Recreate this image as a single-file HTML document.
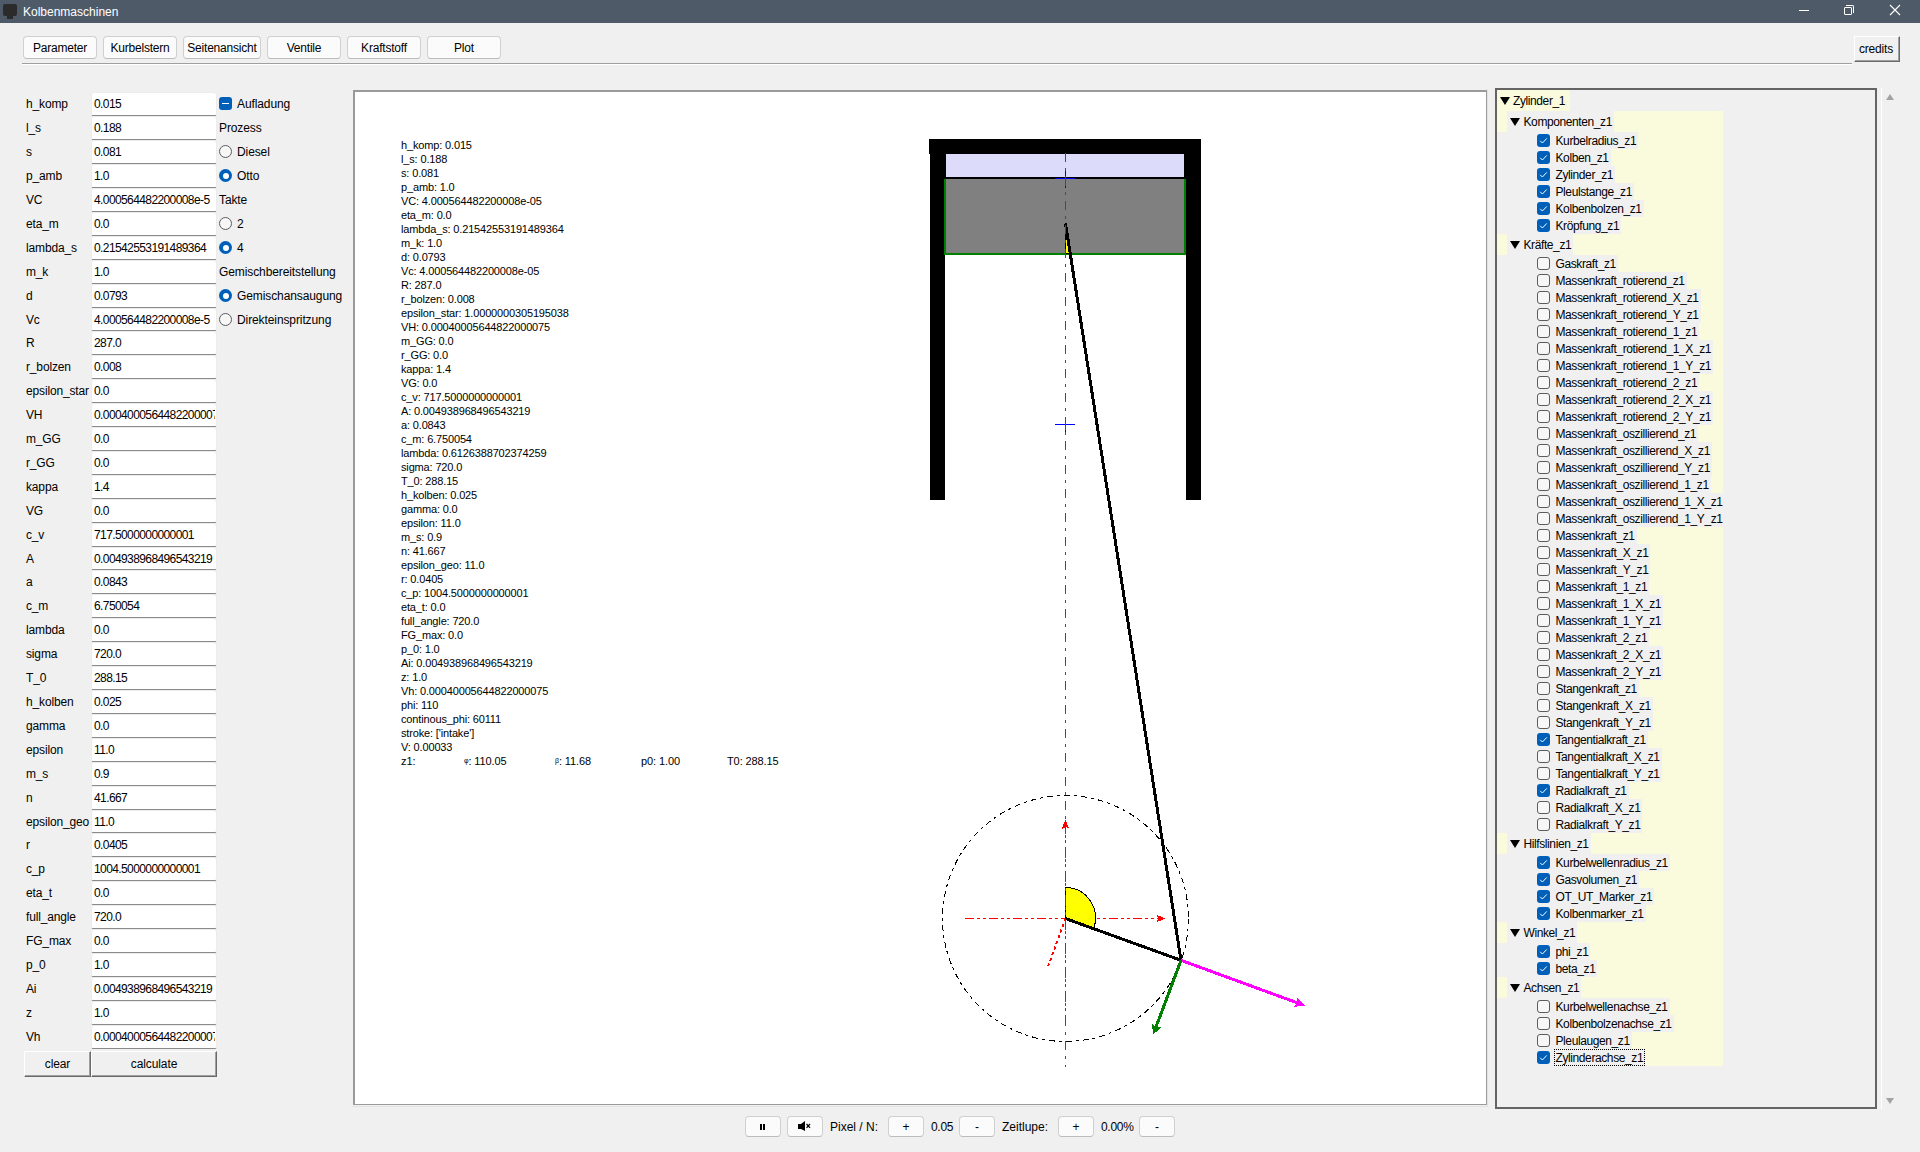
<!DOCTYPE html><html><head><meta charset="utf-8"><style>
html,body{margin:0;padding:0;}
body{width:1920px;height:1152px;overflow:hidden;background:#f0f0f0;position:relative;font-family:"Liberation Sans",sans-serif;}
.t{position:absolute;white-space:pre;line-height:1;}
.r{position:absolute;box-sizing:border-box;}
</style></head><body>
<div class="r" style="left:0px;top:0px;width:1920px;height:23px;background:#4f5a69;"></div>
<div class="r" style="left:3px;top:4px;width:14px;height:12px;background:#2b2b2b;border-radius:2px;"></div>
<div class="r" style="left:7px;top:16px;width:6px;height:3px;background:#2b2b2b;"></div>
<div class="t" style="left:23px;top:5.84px;font-size:12px;letter-spacing:0px;color:#ffffff;">Kolbenmaschinen</div>
<div class="r" style="left:1799px;top:10px;width:10px;height:1px;background:#ffffff;"></div>
<div class="r" style="left:1844px;top:7px;width:8px;height:8px;border:1px solid #fff;border-radius:1px;"></div>
<div class="r" style="left:1846px;top:5px;width:8px;height:8px;border-top:1px solid #fff;border-right:1px solid #fff;border-top-right-radius:2px;"></div>
<svg style="position:absolute;left:1889px;top:4px" width="13" height="13"><path d="M1 1 L11 11 M11 1 L1 11" stroke="#fff" stroke-width="1.1"/></svg>
<div class="r" style="left:23px;top:36px;width:74px;height:23px;background:#fbfbfb;border:1px solid #d0d0d0;border-bottom-color:#bcbcbc;border-radius:4px;"></div>
<div class="t" style="left:23px;top:41.84px;width:74px;text-align:center;font-size:12px;letter-spacing:-0.2px;">Parameter</div>
<div class="r" style="left:103px;top:36px;width:74px;height:23px;background:#fbfbfb;border:1px solid #d0d0d0;border-bottom-color:#bcbcbc;border-radius:4px;"></div>
<div class="t" style="left:103px;top:41.84px;width:74px;text-align:center;font-size:12px;letter-spacing:-0.2px;">Kurbelstern</div>
<div class="r" style="left:183px;top:36px;width:78px;height:23px;background:#fbfbfb;border:1px solid #d0d0d0;border-bottom-color:#bcbcbc;border-radius:4px;"></div>
<div class="t" style="left:183px;top:41.84px;width:78px;text-align:center;font-size:12px;letter-spacing:-0.2px;">Seitenansicht</div>
<div class="r" style="left:267px;top:36px;width:74px;height:23px;background:#fbfbfb;border:1px solid #d0d0d0;border-bottom-color:#bcbcbc;border-radius:4px;"></div>
<div class="t" style="left:267px;top:41.84px;width:74px;text-align:center;font-size:12px;letter-spacing:-0.2px;">Ventile</div>
<div class="r" style="left:347px;top:36px;width:74px;height:23px;background:#fbfbfb;border:1px solid #d0d0d0;border-bottom-color:#bcbcbc;border-radius:4px;"></div>
<div class="t" style="left:347px;top:41.84px;width:74px;text-align:center;font-size:12px;letter-spacing:-0.2px;">Kraftstoff</div>
<div class="r" style="left:427px;top:36px;width:74px;height:23px;background:#fbfbfb;border:1px solid #d0d0d0;border-bottom-color:#bcbcbc;border-radius:4px;"></div>
<div class="t" style="left:427px;top:41.84px;width:74px;text-align:center;font-size:12px;letter-spacing:-0.2px;">Plot</div>
<div class="r" style="left:22px;top:63px;width:1830px;height:1px;background:#a0a0a0;"></div>
<div class="r" style="left:22px;top:64px;width:1830px;height:1px;background:#ffffff;"></div>
<div class="r" style="left:1854px;top:36px;width:46px;height:26px;background:#f0f0f0;border-top:1px solid #fff;border-left:1px solid #fff;border-right:1px solid #696969;border-bottom:1px solid #696969;box-shadow:inset -1px -1px 0 #a0a0a0;"></div>
<div class="t" style="left:1859px;top:42.84px;font-size:12px;letter-spacing:-0.2px;color:#000;">credits</div>
<div class="t" style="left:26px;top:97.84px;font-size:12px;letter-spacing:-0.15px;color:#000;">h_komp</div>
<div class="r" style="left:91px;top:92px;width:126px;height:24px;background:#fff;border:1px solid #ececec;border-bottom:1px solid #8a8a8a;border-radius:3px 3px 2px 2px;overflow:hidden;"><div class="r" style="left:2px;top:0;width:121px;height:100%;overflow:hidden;"><div class="t" style="left:0;top:4.84px;font-size:12px;letter-spacing:-0.6px;">0.015</div></div></div>
<div class="t" style="left:26px;top:121.84px;font-size:12px;letter-spacing:-0.15px;color:#000;">l_s</div>
<div class="r" style="left:91px;top:116px;width:126px;height:24px;background:#fff;border:1px solid #ececec;border-bottom:1px solid #8a8a8a;border-radius:3px 3px 2px 2px;overflow:hidden;"><div class="r" style="left:2px;top:0;width:121px;height:100%;overflow:hidden;"><div class="t" style="left:0;top:4.84px;font-size:12px;letter-spacing:-0.6px;">0.188</div></div></div>
<div class="t" style="left:26px;top:145.84px;font-size:12px;letter-spacing:-0.15px;color:#000;">s</div>
<div class="r" style="left:91px;top:140px;width:126px;height:24px;background:#fff;border:1px solid #ececec;border-bottom:1px solid #8a8a8a;border-radius:3px 3px 2px 2px;overflow:hidden;"><div class="r" style="left:2px;top:0;width:121px;height:100%;overflow:hidden;"><div class="t" style="left:0;top:4.84px;font-size:12px;letter-spacing:-0.6px;">0.081</div></div></div>
<div class="t" style="left:26px;top:169.84px;font-size:12px;letter-spacing:-0.15px;color:#000;">p_amb</div>
<div class="r" style="left:91px;top:164px;width:126px;height:24px;background:#fff;border:1px solid #ececec;border-bottom:1px solid #8a8a8a;border-radius:3px 3px 2px 2px;overflow:hidden;"><div class="r" style="left:2px;top:0;width:121px;height:100%;overflow:hidden;"><div class="t" style="left:0;top:4.84px;font-size:12px;letter-spacing:-0.6px;">1.0</div></div></div>
<div class="t" style="left:26px;top:193.84px;font-size:12px;letter-spacing:-0.15px;color:#000;">VC</div>
<div class="r" style="left:91px;top:188px;width:126px;height:24px;background:#fff;border:1px solid #ececec;border-bottom:1px solid #8a8a8a;border-radius:3px 3px 2px 2px;overflow:hidden;"><div class="r" style="left:2px;top:0;width:121px;height:100%;overflow:hidden;"><div class="t" style="left:0;top:4.84px;font-size:12px;letter-spacing:-0.6px;">4.000564482200008e-5</div></div></div>
<div class="t" style="left:26px;top:217.84px;font-size:12px;letter-spacing:-0.15px;color:#000;">eta_m</div>
<div class="r" style="left:91px;top:212px;width:126px;height:24px;background:#fff;border:1px solid #ececec;border-bottom:1px solid #8a8a8a;border-radius:3px 3px 2px 2px;overflow:hidden;"><div class="r" style="left:2px;top:0;width:121px;height:100%;overflow:hidden;"><div class="t" style="left:0;top:4.84px;font-size:12px;letter-spacing:-0.6px;">0.0</div></div></div>
<div class="t" style="left:26px;top:241.84px;font-size:12px;letter-spacing:-0.15px;color:#000;">lambda_s</div>
<div class="r" style="left:91px;top:236px;width:126px;height:24px;background:#fff;border:1px solid #ececec;border-bottom:1px solid #8a8a8a;border-radius:3px 3px 2px 2px;overflow:hidden;"><div class="r" style="left:2px;top:0;width:121px;height:100%;overflow:hidden;"><div class="t" style="left:0;top:4.84px;font-size:12px;letter-spacing:-0.6px;">0.21542553191489364</div></div></div>
<div class="t" style="left:26px;top:265.84px;font-size:12px;letter-spacing:-0.15px;color:#000;">m_k</div>
<div class="r" style="left:91px;top:260px;width:126px;height:24px;background:#fff;border:1px solid #ececec;border-bottom:1px solid #8a8a8a;border-radius:3px 3px 2px 2px;overflow:hidden;"><div class="r" style="left:2px;top:0;width:121px;height:100%;overflow:hidden;"><div class="t" style="left:0;top:4.84px;font-size:12px;letter-spacing:-0.6px;">1.0</div></div></div>
<div class="t" style="left:26px;top:289.84px;font-size:12px;letter-spacing:-0.15px;color:#000;">d</div>
<div class="r" style="left:91px;top:284px;width:126px;height:24px;background:#fff;border:1px solid #ececec;border-bottom:1px solid #8a8a8a;border-radius:3px 3px 2px 2px;overflow:hidden;"><div class="r" style="left:2px;top:0;width:121px;height:100%;overflow:hidden;"><div class="t" style="left:0;top:4.84px;font-size:12px;letter-spacing:-0.6px;">0.0793</div></div></div>
<div class="t" style="left:26px;top:313.84px;font-size:12px;letter-spacing:-0.15px;color:#000;">Vc</div>
<div class="r" style="left:91px;top:308px;width:126px;height:23px;background:#fff;border:1px solid #ececec;border-bottom:1px solid #8a8a8a;border-radius:3px 3px 2px 2px;overflow:hidden;"><div class="r" style="left:2px;top:0;width:121px;height:100%;overflow:hidden;"><div class="t" style="left:0;top:4.84px;font-size:12px;letter-spacing:-0.6px;">4.000564482200008e-5</div></div></div>
<div class="t" style="left:26px;top:336.84px;font-size:12px;letter-spacing:-0.15px;color:#000;">R</div>
<div class="r" style="left:91px;top:331px;width:126px;height:24px;background:#fff;border:1px solid #ececec;border-bottom:1px solid #8a8a8a;border-radius:3px 3px 2px 2px;overflow:hidden;"><div class="r" style="left:2px;top:0;width:121px;height:100%;overflow:hidden;"><div class="t" style="left:0;top:4.84px;font-size:12px;letter-spacing:-0.6px;">287.0</div></div></div>
<div class="t" style="left:26px;top:360.84px;font-size:12px;letter-spacing:-0.15px;color:#000;">r_bolzen</div>
<div class="r" style="left:91px;top:355px;width:126px;height:24px;background:#fff;border:1px solid #ececec;border-bottom:1px solid #8a8a8a;border-radius:3px 3px 2px 2px;overflow:hidden;"><div class="r" style="left:2px;top:0;width:121px;height:100%;overflow:hidden;"><div class="t" style="left:0;top:4.84px;font-size:12px;letter-spacing:-0.6px;">0.008</div></div></div>
<div class="t" style="left:26px;top:384.84px;font-size:12px;letter-spacing:-0.15px;color:#000;">epsilon_star</div>
<div class="r" style="left:91px;top:379px;width:126px;height:24px;background:#fff;border:1px solid #ececec;border-bottom:1px solid #8a8a8a;border-radius:3px 3px 2px 2px;overflow:hidden;"><div class="r" style="left:2px;top:0;width:121px;height:100%;overflow:hidden;"><div class="t" style="left:0;top:4.84px;font-size:12px;letter-spacing:-0.6px;">0.0</div></div></div>
<div class="t" style="left:26px;top:408.84px;font-size:12px;letter-spacing:-0.15px;color:#000;">VH</div>
<div class="r" style="left:91px;top:403px;width:126px;height:24px;background:#fff;border:1px solid #ececec;border-bottom:1px solid #8a8a8a;border-radius:3px 3px 2px 2px;overflow:hidden;"><div class="r" style="left:2px;top:0;width:121px;height:100%;overflow:hidden;"><div class="t" style="left:0;top:4.84px;font-size:12px;letter-spacing:-0.6px;">0.00040005644822000075</div></div></div>
<div class="t" style="left:26px;top:432.84px;font-size:12px;letter-spacing:-0.15px;color:#000;">m_GG</div>
<div class="r" style="left:91px;top:427px;width:126px;height:24px;background:#fff;border:1px solid #ececec;border-bottom:1px solid #8a8a8a;border-radius:3px 3px 2px 2px;overflow:hidden;"><div class="r" style="left:2px;top:0;width:121px;height:100%;overflow:hidden;"><div class="t" style="left:0;top:4.84px;font-size:12px;letter-spacing:-0.6px;">0.0</div></div></div>
<div class="t" style="left:26px;top:456.84px;font-size:12px;letter-spacing:-0.15px;color:#000;">r_GG</div>
<div class="r" style="left:91px;top:451px;width:126px;height:24px;background:#fff;border:1px solid #ececec;border-bottom:1px solid #8a8a8a;border-radius:3px 3px 2px 2px;overflow:hidden;"><div class="r" style="left:2px;top:0;width:121px;height:100%;overflow:hidden;"><div class="t" style="left:0;top:4.84px;font-size:12px;letter-spacing:-0.6px;">0.0</div></div></div>
<div class="t" style="left:26px;top:480.84px;font-size:12px;letter-spacing:-0.15px;color:#000;">kappa</div>
<div class="r" style="left:91px;top:475px;width:126px;height:24px;background:#fff;border:1px solid #ececec;border-bottom:1px solid #8a8a8a;border-radius:3px 3px 2px 2px;overflow:hidden;"><div class="r" style="left:2px;top:0;width:121px;height:100%;overflow:hidden;"><div class="t" style="left:0;top:4.84px;font-size:12px;letter-spacing:-0.6px;">1.4</div></div></div>
<div class="t" style="left:26px;top:504.84px;font-size:12px;letter-spacing:-0.15px;color:#000;">VG</div>
<div class="r" style="left:91px;top:499px;width:126px;height:24px;background:#fff;border:1px solid #ececec;border-bottom:1px solid #8a8a8a;border-radius:3px 3px 2px 2px;overflow:hidden;"><div class="r" style="left:2px;top:0;width:121px;height:100%;overflow:hidden;"><div class="t" style="left:0;top:4.84px;font-size:12px;letter-spacing:-0.6px;">0.0</div></div></div>
<div class="t" style="left:26px;top:528.84px;font-size:12px;letter-spacing:-0.15px;color:#000;">c_v</div>
<div class="r" style="left:91px;top:523px;width:126px;height:24px;background:#fff;border:1px solid #ececec;border-bottom:1px solid #8a8a8a;border-radius:3px 3px 2px 2px;overflow:hidden;"><div class="r" style="left:2px;top:0;width:121px;height:100%;overflow:hidden;"><div class="t" style="left:0;top:4.84px;font-size:12px;letter-spacing:-0.6px;">717.5000000000001</div></div></div>
<div class="t" style="left:26px;top:552.84px;font-size:12px;letter-spacing:-0.15px;color:#000;">A</div>
<div class="r" style="left:91px;top:547px;width:126px;height:23px;background:#fff;border:1px solid #ececec;border-bottom:1px solid #8a8a8a;border-radius:3px 3px 2px 2px;overflow:hidden;"><div class="r" style="left:2px;top:0;width:121px;height:100%;overflow:hidden;"><div class="t" style="left:0;top:4.84px;font-size:12px;letter-spacing:-0.6px;">0.004938968496543219</div></div></div>
<div class="t" style="left:26px;top:575.84px;font-size:12px;letter-spacing:-0.15px;color:#000;">a</div>
<div class="r" style="left:91px;top:570px;width:126px;height:24px;background:#fff;border:1px solid #ececec;border-bottom:1px solid #8a8a8a;border-radius:3px 3px 2px 2px;overflow:hidden;"><div class="r" style="left:2px;top:0;width:121px;height:100%;overflow:hidden;"><div class="t" style="left:0;top:4.84px;font-size:12px;letter-spacing:-0.6px;">0.0843</div></div></div>
<div class="t" style="left:26px;top:599.84px;font-size:12px;letter-spacing:-0.15px;color:#000;">c_m</div>
<div class="r" style="left:91px;top:594px;width:126px;height:24px;background:#fff;border:1px solid #ececec;border-bottom:1px solid #8a8a8a;border-radius:3px 3px 2px 2px;overflow:hidden;"><div class="r" style="left:2px;top:0;width:121px;height:100%;overflow:hidden;"><div class="t" style="left:0;top:4.84px;font-size:12px;letter-spacing:-0.6px;">6.750054</div></div></div>
<div class="t" style="left:26px;top:623.84px;font-size:12px;letter-spacing:-0.15px;color:#000;">lambda</div>
<div class="r" style="left:91px;top:618px;width:126px;height:24px;background:#fff;border:1px solid #ececec;border-bottom:1px solid #8a8a8a;border-radius:3px 3px 2px 2px;overflow:hidden;"><div class="r" style="left:2px;top:0;width:121px;height:100%;overflow:hidden;"><div class="t" style="left:0;top:4.84px;font-size:12px;letter-spacing:-0.6px;">0.0</div></div></div>
<div class="t" style="left:26px;top:647.84px;font-size:12px;letter-spacing:-0.15px;color:#000;">sigma</div>
<div class="r" style="left:91px;top:642px;width:126px;height:24px;background:#fff;border:1px solid #ececec;border-bottom:1px solid #8a8a8a;border-radius:3px 3px 2px 2px;overflow:hidden;"><div class="r" style="left:2px;top:0;width:121px;height:100%;overflow:hidden;"><div class="t" style="left:0;top:4.84px;font-size:12px;letter-spacing:-0.6px;">720.0</div></div></div>
<div class="t" style="left:26px;top:671.84px;font-size:12px;letter-spacing:-0.15px;color:#000;">T_0</div>
<div class="r" style="left:91px;top:666px;width:126px;height:24px;background:#fff;border:1px solid #ececec;border-bottom:1px solid #8a8a8a;border-radius:3px 3px 2px 2px;overflow:hidden;"><div class="r" style="left:2px;top:0;width:121px;height:100%;overflow:hidden;"><div class="t" style="left:0;top:4.84px;font-size:12px;letter-spacing:-0.6px;">288.15</div></div></div>
<div class="t" style="left:26px;top:695.84px;font-size:12px;letter-spacing:-0.15px;color:#000;">h_kolben</div>
<div class="r" style="left:91px;top:690px;width:126px;height:24px;background:#fff;border:1px solid #ececec;border-bottom:1px solid #8a8a8a;border-radius:3px 3px 2px 2px;overflow:hidden;"><div class="r" style="left:2px;top:0;width:121px;height:100%;overflow:hidden;"><div class="t" style="left:0;top:4.84px;font-size:12px;letter-spacing:-0.6px;">0.025</div></div></div>
<div class="t" style="left:26px;top:719.84px;font-size:12px;letter-spacing:-0.15px;color:#000;">gamma</div>
<div class="r" style="left:91px;top:714px;width:126px;height:24px;background:#fff;border:1px solid #ececec;border-bottom:1px solid #8a8a8a;border-radius:3px 3px 2px 2px;overflow:hidden;"><div class="r" style="left:2px;top:0;width:121px;height:100%;overflow:hidden;"><div class="t" style="left:0;top:4.84px;font-size:12px;letter-spacing:-0.6px;">0.0</div></div></div>
<div class="t" style="left:26px;top:743.84px;font-size:12px;letter-spacing:-0.15px;color:#000;">epsilon</div>
<div class="r" style="left:91px;top:738px;width:126px;height:24px;background:#fff;border:1px solid #ececec;border-bottom:1px solid #8a8a8a;border-radius:3px 3px 2px 2px;overflow:hidden;"><div class="r" style="left:2px;top:0;width:121px;height:100%;overflow:hidden;"><div class="t" style="left:0;top:4.84px;font-size:12px;letter-spacing:-0.6px;">11.0</div></div></div>
<div class="t" style="left:26px;top:767.84px;font-size:12px;letter-spacing:-0.15px;color:#000;">m_s</div>
<div class="r" style="left:91px;top:762px;width:126px;height:24px;background:#fff;border:1px solid #ececec;border-bottom:1px solid #8a8a8a;border-radius:3px 3px 2px 2px;overflow:hidden;"><div class="r" style="left:2px;top:0;width:121px;height:100%;overflow:hidden;"><div class="t" style="left:0;top:4.84px;font-size:12px;letter-spacing:-0.6px;">0.9</div></div></div>
<div class="t" style="left:26px;top:791.84px;font-size:12px;letter-spacing:-0.15px;color:#000;">n</div>
<div class="r" style="left:91px;top:786px;width:126px;height:24px;background:#fff;border:1px solid #ececec;border-bottom:1px solid #8a8a8a;border-radius:3px 3px 2px 2px;overflow:hidden;"><div class="r" style="left:2px;top:0;width:121px;height:100%;overflow:hidden;"><div class="t" style="left:0;top:4.84px;font-size:12px;letter-spacing:-0.6px;">41.667</div></div></div>
<div class="t" style="left:26px;top:815.84px;font-size:12px;letter-spacing:-0.15px;color:#000;">epsilon_geo</div>
<div class="r" style="left:91px;top:810px;width:126px;height:23px;background:#fff;border:1px solid #ececec;border-bottom:1px solid #8a8a8a;border-radius:3px 3px 2px 2px;overflow:hidden;"><div class="r" style="left:2px;top:0;width:121px;height:100%;overflow:hidden;"><div class="t" style="left:0;top:4.84px;font-size:12px;letter-spacing:-0.6px;">11.0</div></div></div>
<div class="t" style="left:26px;top:838.84px;font-size:12px;letter-spacing:-0.15px;color:#000;">r</div>
<div class="r" style="left:91px;top:833px;width:126px;height:24px;background:#fff;border:1px solid #ececec;border-bottom:1px solid #8a8a8a;border-radius:3px 3px 2px 2px;overflow:hidden;"><div class="r" style="left:2px;top:0;width:121px;height:100%;overflow:hidden;"><div class="t" style="left:0;top:4.84px;font-size:12px;letter-spacing:-0.6px;">0.0405</div></div></div>
<div class="t" style="left:26px;top:862.84px;font-size:12px;letter-spacing:-0.15px;color:#000;">c_p</div>
<div class="r" style="left:91px;top:857px;width:126px;height:24px;background:#fff;border:1px solid #ececec;border-bottom:1px solid #8a8a8a;border-radius:3px 3px 2px 2px;overflow:hidden;"><div class="r" style="left:2px;top:0;width:121px;height:100%;overflow:hidden;"><div class="t" style="left:0;top:4.84px;font-size:12px;letter-spacing:-0.6px;">1004.5000000000001</div></div></div>
<div class="t" style="left:26px;top:886.84px;font-size:12px;letter-spacing:-0.15px;color:#000;">eta_t</div>
<div class="r" style="left:91px;top:881px;width:126px;height:24px;background:#fff;border:1px solid #ececec;border-bottom:1px solid #8a8a8a;border-radius:3px 3px 2px 2px;overflow:hidden;"><div class="r" style="left:2px;top:0;width:121px;height:100%;overflow:hidden;"><div class="t" style="left:0;top:4.84px;font-size:12px;letter-spacing:-0.6px;">0.0</div></div></div>
<div class="t" style="left:26px;top:910.84px;font-size:12px;letter-spacing:-0.15px;color:#000;">full_angle</div>
<div class="r" style="left:91px;top:905px;width:126px;height:24px;background:#fff;border:1px solid #ececec;border-bottom:1px solid #8a8a8a;border-radius:3px 3px 2px 2px;overflow:hidden;"><div class="r" style="left:2px;top:0;width:121px;height:100%;overflow:hidden;"><div class="t" style="left:0;top:4.84px;font-size:12px;letter-spacing:-0.6px;">720.0</div></div></div>
<div class="t" style="left:26px;top:934.84px;font-size:12px;letter-spacing:-0.15px;color:#000;">FG_max</div>
<div class="r" style="left:91px;top:929px;width:126px;height:24px;background:#fff;border:1px solid #ececec;border-bottom:1px solid #8a8a8a;border-radius:3px 3px 2px 2px;overflow:hidden;"><div class="r" style="left:2px;top:0;width:121px;height:100%;overflow:hidden;"><div class="t" style="left:0;top:4.84px;font-size:12px;letter-spacing:-0.6px;">0.0</div></div></div>
<div class="t" style="left:26px;top:958.84px;font-size:12px;letter-spacing:-0.15px;color:#000;">p_0</div>
<div class="r" style="left:91px;top:953px;width:126px;height:24px;background:#fff;border:1px solid #ececec;border-bottom:1px solid #8a8a8a;border-radius:3px 3px 2px 2px;overflow:hidden;"><div class="r" style="left:2px;top:0;width:121px;height:100%;overflow:hidden;"><div class="t" style="left:0;top:4.84px;font-size:12px;letter-spacing:-0.6px;">1.0</div></div></div>
<div class="t" style="left:26px;top:982.84px;font-size:12px;letter-spacing:-0.15px;color:#000;">Ai</div>
<div class="r" style="left:91px;top:977px;width:126px;height:24px;background:#fff;border:1px solid #ececec;border-bottom:1px solid #8a8a8a;border-radius:3px 3px 2px 2px;overflow:hidden;"><div class="r" style="left:2px;top:0;width:121px;height:100%;overflow:hidden;"><div class="t" style="left:0;top:4.84px;font-size:12px;letter-spacing:-0.6px;">0.004938968496543219</div></div></div>
<div class="t" style="left:26px;top:1006.84px;font-size:12px;letter-spacing:-0.15px;color:#000;">z</div>
<div class="r" style="left:91px;top:1001px;width:126px;height:24px;background:#fff;border:1px solid #ececec;border-bottom:1px solid #8a8a8a;border-radius:3px 3px 2px 2px;overflow:hidden;"><div class="r" style="left:2px;top:0;width:121px;height:100%;overflow:hidden;"><div class="t" style="left:0;top:4.84px;font-size:12px;letter-spacing:-0.6px;">1.0</div></div></div>
<div class="t" style="left:26px;top:1030.84px;font-size:12px;letter-spacing:-0.15px;color:#000;">Vh</div>
<div class="r" style="left:91px;top:1025px;width:126px;height:24px;background:#fff;border:1px solid #ececec;border-bottom:1px solid #8a8a8a;border-radius:3px 3px 2px 2px;overflow:hidden;"><div class="r" style="left:2px;top:0;width:121px;height:100%;overflow:hidden;"><div class="t" style="left:0;top:4.84px;font-size:12px;letter-spacing:-0.6px;">0.00040005644822000075</div></div></div>
<div class="r" style="left:219px;top:97.0px;width:13px;height:13px;border-radius:3px;background:#005fb8;"></div>
<div class="r" style="left:222px;top:103.0px;width:7px;height:1px;background:#fff;"></div>
<div class="t" style="left:237px;top:97.84px;font-size:12px;letter-spacing:-0.1px;color:#000;">Aufladung</div>
<div class="t" style="left:219px;top:121.84px;font-size:12px;letter-spacing:-0.1px;color:#000;">Prozess</div>
<div class="r" style="left:219px;top:145.0px;width:13px;height:13px;border-radius:50%;border:1px solid #5c5c5c;background:#f7f7f7;"></div>
<div class="t" style="left:237px;top:145.84px;font-size:12px;letter-spacing:-0.1px;color:#000;">Diesel</div>
<div class="r" style="left:219px;top:169.0px;width:13px;height:13px;border-radius:50%;background:#005fb8;"></div>
<div class="r" style="left:222.5px;top:172.5px;width:6px;height:6px;border-radius:50%;background:#fff;"></div>
<div class="t" style="left:237px;top:169.84px;font-size:12px;letter-spacing:-0.1px;color:#000;">Otto</div>
<div class="t" style="left:219px;top:193.84px;font-size:12px;letter-spacing:-0.1px;color:#000;">Takte</div>
<div class="r" style="left:219px;top:217.0px;width:13px;height:13px;border-radius:50%;border:1px solid #5c5c5c;background:#f7f7f7;"></div>
<div class="t" style="left:237px;top:217.84px;font-size:12px;letter-spacing:-0.1px;color:#000;">2</div>
<div class="r" style="left:219px;top:241.0px;width:13px;height:13px;border-radius:50%;background:#005fb8;"></div>
<div class="r" style="left:222.5px;top:244.5px;width:6px;height:6px;border-radius:50%;background:#fff;"></div>
<div class="t" style="left:237px;top:241.84px;font-size:12px;letter-spacing:-0.1px;color:#000;">4</div>
<div class="t" style="left:219px;top:265.84px;font-size:12px;letter-spacing:-0.1px;color:#000;">Gemischbereitstellung</div>
<div class="r" style="left:219px;top:289.0px;width:13px;height:13px;border-radius:50%;background:#005fb8;"></div>
<div class="r" style="left:222.5px;top:292.5px;width:6px;height:6px;border-radius:50%;background:#fff;"></div>
<div class="t" style="left:237px;top:289.84px;font-size:12px;letter-spacing:-0.1px;color:#000;">Gemischansaugung</div>
<div class="r" style="left:219px;top:313.0px;width:13px;height:13px;border-radius:50%;border:1px solid #5c5c5c;background:#f7f7f7;"></div>
<div class="t" style="left:237px;top:313.84px;font-size:12px;letter-spacing:-0.1px;color:#000;">Direkteinspritzung</div>
<div class="r" style="left:24px;top:1051px;width:67px;height:26px;background:#f0f0f0;border-top:1px solid #fff;border-left:1px solid #fff;border-right:1px solid #696969;border-bottom:1px solid #696969;box-shadow:inset -1px -1px 0 #a0a0a0;"></div>
<div class="t" style="left:24px;top:1057.84px;width:67px;text-align:center;font-size:12px;letter-spacing:-0.1px;">clear</div>
<div class="r" style="left:91px;top:1051px;width:126px;height:26px;background:#f0f0f0;border-top:1px solid #fff;border-left:1px solid #fff;border-right:1px solid #696969;border-bottom:1px solid #696969;box-shadow:inset -1px -1px 0 #a0a0a0;"></div>
<div class="t" style="left:91px;top:1057.84px;width:126px;text-align:center;font-size:12px;letter-spacing:-0.1px;">calculate</div>
<div class="r" style="left:352px;top:89px;width:1136px;height:1018px;border-right:1px solid #e3e3e3;border-bottom:1px solid #e3e3e3;"></div>
<div class="r" style="left:353px;top:90px;width:1134px;height:1015px;background:#fff;border-top:2px solid #9a9a9a;border-left:2px solid #9a9a9a;border-right:1px solid #9a9a9a;border-bottom:1px solid #9a9a9a;"></div>
<div class="t" style="left:401px;top:139.69px;font-size:11px;letter-spacing:-0.15px;color:#000;">h_komp: 0.015</div>
<div class="t" style="left:401px;top:153.69px;font-size:11px;letter-spacing:-0.15px;color:#000;">l_s: 0.188</div>
<div class="t" style="left:401px;top:167.69px;font-size:11px;letter-spacing:-0.15px;color:#000;">s: 0.081</div>
<div class="t" style="left:401px;top:181.69px;font-size:11px;letter-spacing:-0.15px;color:#000;">p_amb: 1.0</div>
<div class="t" style="left:401px;top:195.69px;font-size:11px;letter-spacing:-0.15px;color:#000;">VC: 4.000564482200008e-05</div>
<div class="t" style="left:401px;top:209.69px;font-size:11px;letter-spacing:-0.15px;color:#000;">eta_m: 0.0</div>
<div class="t" style="left:401px;top:223.69px;font-size:11px;letter-spacing:-0.15px;color:#000;">lambda_s: 0.21542553191489364</div>
<div class="t" style="left:401px;top:237.69px;font-size:11px;letter-spacing:-0.15px;color:#000;">m_k: 1.0</div>
<div class="t" style="left:401px;top:251.69px;font-size:11px;letter-spacing:-0.15px;color:#000;">d: 0.0793</div>
<div class="t" style="left:401px;top:265.69px;font-size:11px;letter-spacing:-0.15px;color:#000;">Vc: 4.000564482200008e-05</div>
<div class="t" style="left:401px;top:279.69px;font-size:11px;letter-spacing:-0.15px;color:#000;">R: 287.0</div>
<div class="t" style="left:401px;top:293.69px;font-size:11px;letter-spacing:-0.15px;color:#000;">r_bolzen: 0.008</div>
<div class="t" style="left:401px;top:307.69px;font-size:11px;letter-spacing:-0.15px;color:#000;">epsilon_star: 1.0000000305195038</div>
<div class="t" style="left:401px;top:321.69px;font-size:11px;letter-spacing:-0.15px;color:#000;">VH: 0.00040005644822000075</div>
<div class="t" style="left:401px;top:335.69px;font-size:11px;letter-spacing:-0.15px;color:#000;">m_GG: 0.0</div>
<div class="t" style="left:401px;top:349.69px;font-size:11px;letter-spacing:-0.15px;color:#000;">r_GG: 0.0</div>
<div class="t" style="left:401px;top:363.69px;font-size:11px;letter-spacing:-0.15px;color:#000;">kappa: 1.4</div>
<div class="t" style="left:401px;top:377.69px;font-size:11px;letter-spacing:-0.15px;color:#000;">VG: 0.0</div>
<div class="t" style="left:401px;top:391.69px;font-size:11px;letter-spacing:-0.15px;color:#000;">c_v: 717.5000000000001</div>
<div class="t" style="left:401px;top:405.69px;font-size:11px;letter-spacing:-0.15px;color:#000;">A: 0.004938968496543219</div>
<div class="t" style="left:401px;top:419.69px;font-size:11px;letter-spacing:-0.15px;color:#000;">a: 0.0843</div>
<div class="t" style="left:401px;top:433.69px;font-size:11px;letter-spacing:-0.15px;color:#000;">c_m: 6.750054</div>
<div class="t" style="left:401px;top:447.69px;font-size:11px;letter-spacing:-0.15px;color:#000;">lambda: 0.6126388702374259</div>
<div class="t" style="left:401px;top:461.69px;font-size:11px;letter-spacing:-0.15px;color:#000;">sigma: 720.0</div>
<div class="t" style="left:401px;top:475.69px;font-size:11px;letter-spacing:-0.15px;color:#000;">T_0: 288.15</div>
<div class="t" style="left:401px;top:489.69px;font-size:11px;letter-spacing:-0.15px;color:#000;">h_kolben: 0.025</div>
<div class="t" style="left:401px;top:503.69px;font-size:11px;letter-spacing:-0.15px;color:#000;">gamma: 0.0</div>
<div class="t" style="left:401px;top:517.69px;font-size:11px;letter-spacing:-0.15px;color:#000;">epsilon: 11.0</div>
<div class="t" style="left:401px;top:531.69px;font-size:11px;letter-spacing:-0.15px;color:#000;">m_s: 0.9</div>
<div class="t" style="left:401px;top:545.69px;font-size:11px;letter-spacing:-0.15px;color:#000;">n: 41.667</div>
<div class="t" style="left:401px;top:559.69px;font-size:11px;letter-spacing:-0.15px;color:#000;">epsilon_geo: 11.0</div>
<div class="t" style="left:401px;top:573.69px;font-size:11px;letter-spacing:-0.15px;color:#000;">r: 0.0405</div>
<div class="t" style="left:401px;top:587.69px;font-size:11px;letter-spacing:-0.15px;color:#000;">c_p: 1004.5000000000001</div>
<div class="t" style="left:401px;top:601.69px;font-size:11px;letter-spacing:-0.15px;color:#000;">eta_t: 0.0</div>
<div class="t" style="left:401px;top:615.69px;font-size:11px;letter-spacing:-0.15px;color:#000;">full_angle: 720.0</div>
<div class="t" style="left:401px;top:629.69px;font-size:11px;letter-spacing:-0.15px;color:#000;">FG_max: 0.0</div>
<div class="t" style="left:401px;top:643.69px;font-size:11px;letter-spacing:-0.15px;color:#000;">p_0: 1.0</div>
<div class="t" style="left:401px;top:657.69px;font-size:11px;letter-spacing:-0.15px;color:#000;">Ai: 0.004938968496543219</div>
<div class="t" style="left:401px;top:671.69px;font-size:11px;letter-spacing:-0.15px;color:#000;">z: 1.0</div>
<div class="t" style="left:401px;top:685.69px;font-size:11px;letter-spacing:-0.15px;color:#000;">Vh: 0.00040005644822000075</div>
<div class="t" style="left:401px;top:699.69px;font-size:11px;letter-spacing:-0.15px;color:#000;">phi: 110</div>
<div class="t" style="left:401px;top:713.69px;font-size:11px;letter-spacing:-0.15px;color:#000;">continous_phi: 60111</div>
<div class="t" style="left:401px;top:727.69px;font-size:11px;letter-spacing:-0.15px;color:#000;">stroke: ['intake']</div>
<div class="t" style="left:401px;top:741.69px;font-size:11px;letter-spacing:-0.15px;color:#000;">V: 0.00033</div>
<div class="t" style="left:401px;top:755.69px;font-size:11px;letter-spacing:-0.1px;color:#000;">z1:</div>
<div class="t" style="left:464px;top:755.69px;font-size:11px;letter-spacing:-0.1px;color:#000;"><span style="font-size:7px;position:relative;top:-2px">φ</span>: 110.05</div>
<div class="t" style="left:555px;top:755.69px;font-size:11px;letter-spacing:-0.1px;color:#000;"><span style="font-size:7px;position:relative;top:-2px">β</span>: 11.68</div>
<div class="t" style="left:641px;top:755.69px;font-size:11px;letter-spacing:-0.1px;color:#000;">p0: 1.00</div>
<div class="t" style="left:727px;top:755.69px;font-size:11px;letter-spacing:-0.1px;color:#000;">T0: 288.15</div>
<svg style="position:absolute;left:355px;top:92px" width="1131" height="1012" viewBox="355 92 1131 1012" shape-rendering="crispEdges"><rect x="929" y="139" width="272" height="15" fill="#000"/><rect x="930" y="154" width="15" height="346" fill="#000"/><rect x="1186" y="154" width="15" height="346" fill="#000"/><rect x="944" y="154" width="242" height="25" fill="#000"/><rect x="946" y="154" width="238" height="23" fill="#dcdcfa"/><rect x="944" y="179" width="242" height="76" fill="#008000"/><rect x="946" y="179" width="238" height="74" fill="#808080"/><path d="M1065.5 223.5 L1065.5 253.5 A30 30 0 0 0 1070.1 253.1 Z" fill="#ffff00" stroke="#000" stroke-width="1"/><path d="M1055 178.5 H1075 M1065.5 170.5 V187.5" stroke="#0000ff" stroke-width="1.2"/><line x1="1065.5" y1="175.5" x2="1065.5" y2="183.5" stroke="#ff0000" stroke-width="1"/><path d="M1055 424.5 H1075 M1065.5 416.5 V433.5" stroke="#0000ff" stroke-width="1.2"/><line x1="1065.5" y1="421.5" x2="1065.5" y2="429.5" stroke="#ff0000" stroke-width="1"/><line x1="1065.5" y1="223.5" x2="1181" y2="960.3" stroke="#000" stroke-width="3"/><circle cx="1065.5" cy="918.5" r="123" fill="none" stroke="#000" stroke-width="1" stroke-dasharray="6 4 3 4"/><line x1="965" y1="918.5" x2="1158" y2="918.5" stroke="#ff0000" stroke-width="1" stroke-dasharray="9 3 3 3 3 3"/><path d="M1165 918.5 L1156 914.5 L1158 918.5 L1156 922.5 Z" fill="#ff0000"/><path d="M1065.5 820 L1061.5 829 L1065.5 827 L1069.5 829 Z" fill="#ff0000"/><path d="M1065.5 918.5 L1065.5 887.5 A30.5 30.5 0 0 1 1093.7 928.7 Z" fill="#ffff00" stroke="#000" stroke-width="1"/><line x1="1065.5" y1="918.5" x2="1048.3" y2="965.8" stroke="#ff0000" stroke-width="2" stroke-dasharray="3 3"/><line x1="1065.5" y1="918.5" x2="1181" y2="960.3" stroke="#000" stroke-width="3"/><line x1="1065.5" y1="153" x2="1065.5" y2="1067" stroke="#ff0000" stroke-width="1" stroke-dasharray="9 6 3 6"/><line x1="1065.5" y1="823" x2="1065.5" y2="1018" stroke="#ff0000" stroke-width="1" stroke-dasharray="3 9" stroke-dashoffset="-12"/><line x1="1181" y1="960.3" x2="1297.5" y2="1002.9" stroke="#ff00ff" stroke-width="3"/><path d="M1305.0 1005.6 L1293.9 1006.9 L1297.5 1002.9 L1297.3 997.5 Z" fill="#ff00ff"/><line x1="1181" y1="960.3" x2="1155.9" y2="1027.2" stroke="#008000" stroke-width="3"/><path d="M1153.1 1034.7 L1151.9 1023.6 L1155.9 1027.2 L1161.3 1027.1 Z" fill="#008000"/></svg>
<div class="r" style="left:1495px;top:88px;width:382px;height:1021px;border:2px solid #646464;"></div>
<div class="r" style="left:1497px;top:90px;width:73px;height:21px;background:#fafadc;"></div>
<svg style="position:absolute;left:1500px;top:97px" width="10" height="8"><path d="M0 0 H10 L5 8 Z" fill="#000"/></svg>
<div class="t" style="left:1513px;top:95.14px;font-size:12px;letter-spacing:-0.4px;color:#000;">Zylinder_1</div>
<div class="r" style="left:1497px;top:111px;width:226px;height:123px;background:#fafadc;"></div>
<div class="r" style="left:1507px;top:111px;width:107px;height:21px;background:#f0f0f0;"></div>
<svg style="position:absolute;left:1510px;top:118px" width="10" height="8"><path d="M0 0 H10 L5 8 Z" fill="#000"/></svg>
<div class="t" style="left:1523.5px;top:116.14px;font-size:12px;letter-spacing:-0.4px;color:#000;">Komponenten_z1</div>
<div class="r" style="left:1497px;top:132px;width:141px;height:17px;background:#f0f0f0;"></div>
<div class="r" style="left:1537px;top:134px;width:13px;height:13px;border-radius:3px;background:#005fb8;"></div>
<svg style="position:absolute;left:1537px;top:134px" width="13" height="13"><path d="M3.2 6.8 L5.4 9 L9.8 4.4" fill="none" stroke="#fff" stroke-width="1"/></svg>
<div class="t" style="left:1555.5px;top:134.64px;font-size:12px;letter-spacing:-0.4px;color:#000;">Kurbelradius_z1</div>
<div class="r" style="left:1497px;top:149px;width:114px;height:17px;background:#f0f0f0;"></div>
<div class="r" style="left:1537px;top:151px;width:13px;height:13px;border-radius:3px;background:#005fb8;"></div>
<svg style="position:absolute;left:1537px;top:151px" width="13" height="13"><path d="M3.2 6.8 L5.4 9 L9.8 4.4" fill="none" stroke="#fff" stroke-width="1"/></svg>
<div class="t" style="left:1555.5px;top:151.64px;font-size:12px;letter-spacing:-0.4px;color:#000;">Kolben_z1</div>
<div class="r" style="left:1497px;top:166px;width:118px;height:17px;background:#f0f0f0;"></div>
<div class="r" style="left:1537px;top:168px;width:13px;height:13px;border-radius:3px;background:#005fb8;"></div>
<svg style="position:absolute;left:1537px;top:168px" width="13" height="13"><path d="M3.2 6.8 L5.4 9 L9.8 4.4" fill="none" stroke="#fff" stroke-width="1"/></svg>
<div class="t" style="left:1555.5px;top:168.64px;font-size:12px;letter-spacing:-0.4px;color:#000;">Zylinder_z1</div>
<div class="r" style="left:1497px;top:183px;width:137px;height:17px;background:#f0f0f0;"></div>
<div class="r" style="left:1537px;top:185px;width:13px;height:13px;border-radius:3px;background:#005fb8;"></div>
<svg style="position:absolute;left:1537px;top:185px" width="13" height="13"><path d="M3.2 6.8 L5.4 9 L9.8 4.4" fill="none" stroke="#fff" stroke-width="1"/></svg>
<div class="t" style="left:1555.5px;top:185.64px;font-size:12px;letter-spacing:-0.4px;color:#000;">Pleulstange_z1</div>
<div class="r" style="left:1497px;top:200px;width:147px;height:17px;background:#f0f0f0;"></div>
<div class="r" style="left:1537px;top:202px;width:13px;height:13px;border-radius:3px;background:#005fb8;"></div>
<svg style="position:absolute;left:1537px;top:202px" width="13" height="13"><path d="M3.2 6.8 L5.4 9 L9.8 4.4" fill="none" stroke="#fff" stroke-width="1"/></svg>
<div class="t" style="left:1555.5px;top:202.64px;font-size:12px;letter-spacing:-0.4px;color:#000;">Kolbenbolzen_z1</div>
<div class="r" style="left:1497px;top:217px;width:124px;height:17px;background:#f0f0f0;"></div>
<div class="r" style="left:1537px;top:219px;width:13px;height:13px;border-radius:3px;background:#005fb8;"></div>
<svg style="position:absolute;left:1537px;top:219px" width="13" height="13"><path d="M3.2 6.8 L5.4 9 L9.8 4.4" fill="none" stroke="#fff" stroke-width="1"/></svg>
<div class="t" style="left:1555.5px;top:219.64px;font-size:12px;letter-spacing:-0.4px;color:#000;">Kröpfung_z1</div>
<div class="r" style="left:1497px;top:234px;width:226px;height:599px;background:#fafadc;"></div>
<div class="r" style="left:1507px;top:234px;width:66px;height:21px;background:#f0f0f0;"></div>
<svg style="position:absolute;left:1510px;top:241px" width="10" height="8"><path d="M0 0 H10 L5 8 Z" fill="#000"/></svg>
<div class="t" style="left:1523.5px;top:239.14px;font-size:12px;letter-spacing:-0.4px;color:#000;">Kräfte_z1</div>
<div class="r" style="left:1497px;top:255px;width:121px;height:17px;background:#f0f0f0;"></div>
<div class="r" style="left:1537px;top:257px;width:13px;height:13px;border-radius:3px;border:1px solid #5c5c5c;background:#f7f7f7;"></div>
<div class="t" style="left:1555.5px;top:257.64px;font-size:12px;letter-spacing:-0.4px;color:#000;">Gaskraft_z1</div>
<div class="r" style="left:1497px;top:272px;width:190px;height:17px;background:#f0f0f0;"></div>
<div class="r" style="left:1537px;top:274px;width:13px;height:13px;border-radius:3px;border:1px solid #5c5c5c;background:#f7f7f7;"></div>
<div class="t" style="left:1555.5px;top:274.64px;font-size:12px;letter-spacing:-0.4px;color:#000;">Massenkraft_rotierend_z1</div>
<div class="r" style="left:1497px;top:289px;width:204px;height:17px;background:#f0f0f0;"></div>
<div class="r" style="left:1537px;top:291px;width:13px;height:13px;border-radius:3px;border:1px solid #5c5c5c;background:#f7f7f7;"></div>
<div class="t" style="left:1555.5px;top:291.64px;font-size:12px;letter-spacing:-0.4px;color:#000;">Massenkraft_rotierend_X_z1</div>
<div class="r" style="left:1497px;top:306px;width:204px;height:17px;background:#f0f0f0;"></div>
<div class="r" style="left:1537px;top:308px;width:13px;height:13px;border-radius:3px;border:1px solid #5c5c5c;background:#f7f7f7;"></div>
<div class="t" style="left:1555.5px;top:308.64px;font-size:12px;letter-spacing:-0.4px;color:#000;">Massenkraft_rotierend_Y_z1</div>
<div class="r" style="left:1497px;top:323px;width:202px;height:17px;background:#f0f0f0;"></div>
<div class="r" style="left:1537px;top:325px;width:13px;height:13px;border-radius:3px;border:1px solid #5c5c5c;background:#f7f7f7;"></div>
<div class="t" style="left:1555.5px;top:325.64px;font-size:12px;letter-spacing:-0.4px;color:#000;">Massenkraft_rotierend_1_z1</div>
<div class="r" style="left:1497px;top:340px;width:216px;height:17px;background:#f0f0f0;"></div>
<div class="r" style="left:1537px;top:342px;width:13px;height:13px;border-radius:3px;border:1px solid #5c5c5c;background:#f7f7f7;"></div>
<div class="t" style="left:1555.5px;top:342.64px;font-size:12px;letter-spacing:-0.4px;color:#000;">Massenkraft_rotierend_1_X_z1</div>
<div class="r" style="left:1497px;top:357px;width:216px;height:17px;background:#f0f0f0;"></div>
<div class="r" style="left:1537px;top:359px;width:13px;height:13px;border-radius:3px;border:1px solid #5c5c5c;background:#f7f7f7;"></div>
<div class="t" style="left:1555.5px;top:359.64px;font-size:12px;letter-spacing:-0.4px;color:#000;">Massenkraft_rotierend_1_Y_z1</div>
<div class="r" style="left:1497px;top:374px;width:202px;height:17px;background:#f0f0f0;"></div>
<div class="r" style="left:1537px;top:376px;width:13px;height:13px;border-radius:3px;border:1px solid #5c5c5c;background:#f7f7f7;"></div>
<div class="t" style="left:1555.5px;top:376.64px;font-size:12px;letter-spacing:-0.4px;color:#000;">Massenkraft_rotierend_2_z1</div>
<div class="r" style="left:1497px;top:391px;width:216px;height:17px;background:#f0f0f0;"></div>
<div class="r" style="left:1537px;top:393px;width:13px;height:13px;border-radius:3px;border:1px solid #5c5c5c;background:#f7f7f7;"></div>
<div class="t" style="left:1555.5px;top:393.64px;font-size:12px;letter-spacing:-0.4px;color:#000;">Massenkraft_rotierend_2_X_z1</div>
<div class="r" style="left:1497px;top:408px;width:216px;height:17px;background:#f0f0f0;"></div>
<div class="r" style="left:1537px;top:410px;width:13px;height:13px;border-radius:3px;border:1px solid #5c5c5c;background:#f7f7f7;"></div>
<div class="t" style="left:1555.5px;top:410.64px;font-size:12px;letter-spacing:-0.4px;color:#000;">Massenkraft_rotierend_2_Y_z1</div>
<div class="r" style="left:1497px;top:425px;width:201px;height:17px;background:#f0f0f0;"></div>
<div class="r" style="left:1537px;top:427px;width:13px;height:13px;border-radius:3px;border:1px solid #5c5c5c;background:#f7f7f7;"></div>
<div class="t" style="left:1555.5px;top:427.64px;font-size:12px;letter-spacing:-0.4px;color:#000;">Massenkraft_oszillierend_z1</div>
<div class="r" style="left:1497px;top:442px;width:215px;height:17px;background:#f0f0f0;"></div>
<div class="r" style="left:1537px;top:444px;width:13px;height:13px;border-radius:3px;border:1px solid #5c5c5c;background:#f7f7f7;"></div>
<div class="t" style="left:1555.5px;top:444.64px;font-size:12px;letter-spacing:-0.4px;color:#000;">Massenkraft_oszillierend_X_z1</div>
<div class="r" style="left:1497px;top:459px;width:215px;height:17px;background:#f0f0f0;"></div>
<div class="r" style="left:1537px;top:461px;width:13px;height:13px;border-radius:3px;border:1px solid #5c5c5c;background:#f7f7f7;"></div>
<div class="t" style="left:1555.5px;top:461.64px;font-size:12px;letter-spacing:-0.4px;color:#000;">Massenkraft_oszillierend_Y_z1</div>
<div class="r" style="left:1497px;top:476px;width:214px;height:17px;background:#f0f0f0;"></div>
<div class="r" style="left:1537px;top:478px;width:13px;height:13px;border-radius:3px;border:1px solid #5c5c5c;background:#f7f7f7;"></div>
<div class="t" style="left:1555.5px;top:478.64px;font-size:12px;letter-spacing:-0.4px;color:#000;">Massenkraft_oszillierend_1_z1</div>
<div class="r" style="left:1497px;top:493px;width:228px;height:17px;background:#f0f0f0;"></div>
<div class="r" style="left:1537px;top:495px;width:13px;height:13px;border-radius:3px;border:1px solid #5c5c5c;background:#f7f7f7;"></div>
<div class="t" style="left:1555.5px;top:495.64px;font-size:12px;letter-spacing:-0.4px;color:#000;">Massenkraft_oszillierend_1_X_z1</div>
<div class="r" style="left:1497px;top:510px;width:228px;height:17px;background:#f0f0f0;"></div>
<div class="r" style="left:1537px;top:512px;width:13px;height:13px;border-radius:3px;border:1px solid #5c5c5c;background:#f7f7f7;"></div>
<div class="t" style="left:1555.5px;top:512.64px;font-size:12px;letter-spacing:-0.4px;color:#000;">Massenkraft_oszillierend_1_Y_z1</div>
<div class="r" style="left:1497px;top:527px;width:140px;height:17px;background:#f0f0f0;"></div>
<div class="r" style="left:1537px;top:529px;width:13px;height:13px;border-radius:3px;border:1px solid #5c5c5c;background:#f7f7f7;"></div>
<div class="t" style="left:1555.5px;top:529.64px;font-size:12px;letter-spacing:-0.4px;color:#000;">Massenkraft_z1</div>
<div class="r" style="left:1497px;top:544px;width:153px;height:17px;background:#f0f0f0;"></div>
<div class="r" style="left:1537px;top:546px;width:13px;height:13px;border-radius:3px;border:1px solid #5c5c5c;background:#f7f7f7;"></div>
<div class="t" style="left:1555.5px;top:546.64px;font-size:12px;letter-spacing:-0.4px;color:#000;">Massenkraft_X_z1</div>
<div class="r" style="left:1497px;top:561px;width:153px;height:17px;background:#f0f0f0;"></div>
<div class="r" style="left:1537px;top:563px;width:13px;height:13px;border-radius:3px;border:1px solid #5c5c5c;background:#f7f7f7;"></div>
<div class="t" style="left:1555.5px;top:563.64px;font-size:12px;letter-spacing:-0.4px;color:#000;">Massenkraft_Y_z1</div>
<div class="r" style="left:1497px;top:578px;width:152px;height:17px;background:#f0f0f0;"></div>
<div class="r" style="left:1537px;top:580px;width:13px;height:13px;border-radius:3px;border:1px solid #5c5c5c;background:#f7f7f7;"></div>
<div class="t" style="left:1555.5px;top:580.64px;font-size:12px;letter-spacing:-0.4px;color:#000;">Massenkraft_1_z1</div>
<div class="r" style="left:1497px;top:595px;width:166px;height:17px;background:#f0f0f0;"></div>
<div class="r" style="left:1537px;top:597px;width:13px;height:13px;border-radius:3px;border:1px solid #5c5c5c;background:#f7f7f7;"></div>
<div class="t" style="left:1555.5px;top:597.64px;font-size:12px;letter-spacing:-0.4px;color:#000;">Massenkraft_1_X_z1</div>
<div class="r" style="left:1497px;top:612px;width:166px;height:17px;background:#f0f0f0;"></div>
<div class="r" style="left:1537px;top:614px;width:13px;height:13px;border-radius:3px;border:1px solid #5c5c5c;background:#f7f7f7;"></div>
<div class="t" style="left:1555.5px;top:614.64px;font-size:12px;letter-spacing:-0.4px;color:#000;">Massenkraft_1_Y_z1</div>
<div class="r" style="left:1497px;top:629px;width:152px;height:17px;background:#f0f0f0;"></div>
<div class="r" style="left:1537px;top:631px;width:13px;height:13px;border-radius:3px;border:1px solid #5c5c5c;background:#f7f7f7;"></div>
<div class="t" style="left:1555.5px;top:631.64px;font-size:12px;letter-spacing:-0.4px;color:#000;">Massenkraft_2_z1</div>
<div class="r" style="left:1497px;top:646px;width:166px;height:17px;background:#f0f0f0;"></div>
<div class="r" style="left:1537px;top:648px;width:13px;height:13px;border-radius:3px;border:1px solid #5c5c5c;background:#f7f7f7;"></div>
<div class="t" style="left:1555.5px;top:648.64px;font-size:12px;letter-spacing:-0.4px;color:#000;">Massenkraft_2_X_z1</div>
<div class="r" style="left:1497px;top:663px;width:166px;height:17px;background:#f0f0f0;"></div>
<div class="r" style="left:1537px;top:665px;width:13px;height:13px;border-radius:3px;border:1px solid #5c5c5c;background:#f7f7f7;"></div>
<div class="t" style="left:1555.5px;top:665.64px;font-size:12px;letter-spacing:-0.4px;color:#000;">Massenkraft_2_Y_z1</div>
<div class="r" style="left:1497px;top:680px;width:142px;height:17px;background:#f0f0f0;"></div>
<div class="r" style="left:1537px;top:682px;width:13px;height:13px;border-radius:3px;border:1px solid #5c5c5c;background:#f7f7f7;"></div>
<div class="t" style="left:1555.5px;top:682.64px;font-size:12px;letter-spacing:-0.4px;color:#000;">Stangenkraft_z1</div>
<div class="r" style="left:1497px;top:697px;width:156px;height:17px;background:#f0f0f0;"></div>
<div class="r" style="left:1537px;top:699px;width:13px;height:13px;border-radius:3px;border:1px solid #5c5c5c;background:#f7f7f7;"></div>
<div class="t" style="left:1555.5px;top:699.64px;font-size:12px;letter-spacing:-0.4px;color:#000;">Stangenkraft_X_z1</div>
<div class="r" style="left:1497px;top:714px;width:156px;height:17px;background:#f0f0f0;"></div>
<div class="r" style="left:1537px;top:716px;width:13px;height:13px;border-radius:3px;border:1px solid #5c5c5c;background:#f7f7f7;"></div>
<div class="t" style="left:1555.5px;top:716.64px;font-size:12px;letter-spacing:-0.4px;color:#000;">Stangenkraft_Y_z1</div>
<div class="r" style="left:1497px;top:731px;width:151px;height:17px;background:#f0f0f0;"></div>
<div class="r" style="left:1537px;top:733px;width:13px;height:13px;border-radius:3px;background:#005fb8;"></div>
<svg style="position:absolute;left:1537px;top:733px" width="13" height="13"><path d="M3.2 6.8 L5.4 9 L9.8 4.4" fill="none" stroke="#fff" stroke-width="1"/></svg>
<div class="t" style="left:1555.5px;top:733.64px;font-size:12px;letter-spacing:-0.4px;color:#000;">Tangentialkraft_z1</div>
<div class="r" style="left:1497px;top:748px;width:165px;height:17px;background:#f0f0f0;"></div>
<div class="r" style="left:1537px;top:750px;width:13px;height:13px;border-radius:3px;border:1px solid #5c5c5c;background:#f7f7f7;"></div>
<div class="t" style="left:1555.5px;top:750.64px;font-size:12px;letter-spacing:-0.4px;color:#000;">Tangentialkraft_X_z1</div>
<div class="r" style="left:1497px;top:765px;width:165px;height:17px;background:#f0f0f0;"></div>
<div class="r" style="left:1537px;top:767px;width:13px;height:13px;border-radius:3px;border:1px solid #5c5c5c;background:#f7f7f7;"></div>
<div class="t" style="left:1555.5px;top:767.64px;font-size:12px;letter-spacing:-0.4px;color:#000;">Tangentialkraft_Y_z1</div>
<div class="r" style="left:1497px;top:782px;width:132px;height:17px;background:#f0f0f0;"></div>
<div class="r" style="left:1537px;top:784px;width:13px;height:13px;border-radius:3px;background:#005fb8;"></div>
<svg style="position:absolute;left:1537px;top:784px" width="13" height="13"><path d="M3.2 6.8 L5.4 9 L9.8 4.4" fill="none" stroke="#fff" stroke-width="1"/></svg>
<div class="t" style="left:1555.5px;top:784.64px;font-size:12px;letter-spacing:-0.4px;color:#000;">Radialkraft_z1</div>
<div class="r" style="left:1497px;top:799px;width:145px;height:17px;background:#f0f0f0;"></div>
<div class="r" style="left:1537px;top:801px;width:13px;height:13px;border-radius:3px;border:1px solid #5c5c5c;background:#f7f7f7;"></div>
<div class="t" style="left:1555.5px;top:801.64px;font-size:12px;letter-spacing:-0.4px;color:#000;">Radialkraft_X_z1</div>
<div class="r" style="left:1497px;top:816px;width:145px;height:17px;background:#f0f0f0;"></div>
<div class="r" style="left:1537px;top:818px;width:13px;height:13px;border-radius:3px;border:1px solid #5c5c5c;background:#f7f7f7;"></div>
<div class="t" style="left:1555.5px;top:818.64px;font-size:12px;letter-spacing:-0.4px;color:#000;">Radialkraft_Y_z1</div>
<div class="r" style="left:1497px;top:833px;width:226px;height:89px;background:#fafadc;"></div>
<div class="r" style="left:1507px;top:833px;width:84px;height:21px;background:#f0f0f0;"></div>
<svg style="position:absolute;left:1510px;top:840px" width="10" height="8"><path d="M0 0 H10 L5 8 Z" fill="#000"/></svg>
<div class="t" style="left:1523.5px;top:838.14px;font-size:12px;letter-spacing:-0.4px;color:#000;">Hilfslinien_z1</div>
<div class="r" style="left:1497px;top:854px;width:173px;height:17px;background:#f0f0f0;"></div>
<div class="r" style="left:1537px;top:856px;width:13px;height:13px;border-radius:3px;background:#005fb8;"></div>
<svg style="position:absolute;left:1537px;top:856px" width="13" height="13"><path d="M3.2 6.8 L5.4 9 L9.8 4.4" fill="none" stroke="#fff" stroke-width="1"/></svg>
<div class="t" style="left:1555.5px;top:856.64px;font-size:12px;letter-spacing:-0.4px;color:#000;">Kurbelwellenradius_z1</div>
<div class="r" style="left:1497px;top:871px;width:142px;height:17px;background:#f0f0f0;"></div>
<div class="r" style="left:1537px;top:873px;width:13px;height:13px;border-radius:3px;background:#005fb8;"></div>
<svg style="position:absolute;left:1537px;top:873px" width="13" height="13"><path d="M3.2 6.8 L5.4 9 L9.8 4.4" fill="none" stroke="#fff" stroke-width="1"/></svg>
<div class="t" style="left:1555.5px;top:873.64px;font-size:12px;letter-spacing:-0.4px;color:#000;">Gasvolumen_z1</div>
<div class="r" style="left:1497px;top:888px;width:157px;height:17px;background:#f0f0f0;"></div>
<div class="r" style="left:1537px;top:890px;width:13px;height:13px;border-radius:3px;background:#005fb8;"></div>
<svg style="position:absolute;left:1537px;top:890px" width="13" height="13"><path d="M3.2 6.8 L5.4 9 L9.8 4.4" fill="none" stroke="#fff" stroke-width="1"/></svg>
<div class="t" style="left:1555.5px;top:890.64px;font-size:12px;letter-spacing:-0.4px;color:#000;">OT_UT_Marker_z1</div>
<div class="r" style="left:1497px;top:905px;width:149px;height:17px;background:#f0f0f0;"></div>
<div class="r" style="left:1537px;top:907px;width:13px;height:13px;border-radius:3px;background:#005fb8;"></div>
<svg style="position:absolute;left:1537px;top:907px" width="13" height="13"><path d="M3.2 6.8 L5.4 9 L9.8 4.4" fill="none" stroke="#fff" stroke-width="1"/></svg>
<div class="t" style="left:1555.5px;top:907.64px;font-size:12px;letter-spacing:-0.4px;color:#000;">Kolbenmarker_z1</div>
<div class="r" style="left:1497px;top:922px;width:226px;height:55px;background:#fafadc;"></div>
<div class="r" style="left:1507px;top:922px;width:70px;height:21px;background:#f0f0f0;"></div>
<svg style="position:absolute;left:1510px;top:929px" width="10" height="8"><path d="M0 0 H10 L5 8 Z" fill="#000"/></svg>
<div class="t" style="left:1523.5px;top:927.14px;font-size:12px;letter-spacing:-0.4px;color:#000;">Winkel_z1</div>
<div class="r" style="left:1497px;top:943px;width:93px;height:17px;background:#f0f0f0;"></div>
<div class="r" style="left:1537px;top:945px;width:13px;height:13px;border-radius:3px;background:#005fb8;"></div>
<svg style="position:absolute;left:1537px;top:945px" width="13" height="13"><path d="M3.2 6.8 L5.4 9 L9.8 4.4" fill="none" stroke="#fff" stroke-width="1"/></svg>
<div class="t" style="left:1555.5px;top:945.64px;font-size:12px;letter-spacing:-0.4px;color:#000;">phi_z1</div>
<div class="r" style="left:1497px;top:960px;width:100px;height:17px;background:#f0f0f0;"></div>
<div class="r" style="left:1537px;top:962px;width:13px;height:13px;border-radius:3px;background:#005fb8;"></div>
<svg style="position:absolute;left:1537px;top:962px" width="13" height="13"><path d="M3.2 6.8 L5.4 9 L9.8 4.4" fill="none" stroke="#fff" stroke-width="1"/></svg>
<div class="t" style="left:1555.5px;top:962.64px;font-size:12px;letter-spacing:-0.4px;color:#000;">beta_z1</div>
<div class="r" style="left:1497px;top:977px;width:226px;height:89px;background:#fafadc;"></div>
<div class="r" style="left:1507px;top:977px;width:74px;height:21px;background:#f0f0f0;"></div>
<svg style="position:absolute;left:1510px;top:984px" width="10" height="8"><path d="M0 0 H10 L5 8 Z" fill="#000"/></svg>
<div class="t" style="left:1523.5px;top:982.14px;font-size:12px;letter-spacing:-0.4px;color:#000;">Achsen_z1</div>
<div class="r" style="left:1497px;top:998px;width:173px;height:17px;background:#f0f0f0;"></div>
<div class="r" style="left:1537px;top:1000px;width:13px;height:13px;border-radius:3px;border:1px solid #5c5c5c;background:#f7f7f7;"></div>
<div class="t" style="left:1555.5px;top:1000.64px;font-size:12px;letter-spacing:-0.4px;color:#000;">Kurbelwellenachse_z1</div>
<div class="r" style="left:1497px;top:1015px;width:177px;height:17px;background:#f0f0f0;"></div>
<div class="r" style="left:1537px;top:1017px;width:13px;height:13px;border-radius:3px;border:1px solid #5c5c5c;background:#f7f7f7;"></div>
<div class="t" style="left:1555.5px;top:1017.64px;font-size:12px;letter-spacing:-0.4px;color:#000;">Kolbenbolzenachse_z1</div>
<div class="r" style="left:1497px;top:1032px;width:135px;height:17px;background:#f0f0f0;"></div>
<div class="r" style="left:1537px;top:1034px;width:13px;height:13px;border-radius:3px;border:1px solid #5c5c5c;background:#f7f7f7;"></div>
<div class="t" style="left:1555.5px;top:1034.64px;font-size:12px;letter-spacing:-0.4px;color:#000;">Pleulaugen_z1</div>
<div class="r" style="left:1497px;top:1049px;width:148px;height:17px;background:#f0f0f0;"></div>
<div class="r" style="left:1537px;top:1051px;width:13px;height:13px;border-radius:3px;background:#005fb8;"></div>
<svg style="position:absolute;left:1537px;top:1051px" width="13" height="13"><path d="M3.2 6.8 L5.4 9 L9.8 4.4" fill="none" stroke="#fff" stroke-width="1"/></svg>
<div class="t" style="left:1555.5px;top:1051.64px;font-size:12px;letter-spacing:-0.4px;color:#000;">Zylinderachse_z1</div>
<div class="r" style="left:1554px;top:1049px;width:91px;height:17px;border:1px dotted #000;"></div>
<div class="r" style="left:1881px;top:88px;width:1px;height:1021px;background:#ffffff;"></div>
<svg style="position:absolute;left:1885px;top:93px" width="10" height="8"><path d="M1 7 L5 1 L9 7 Z" fill="#a3a3a3"/></svg>
<svg style="position:absolute;left:1885px;top:1097px" width="10" height="8"><path d="M1 1 L5 7 L9 1 Z" fill="#a3a3a3"/></svg>
<div class="r" style="left:745px;top:1116px;width:36px;height:21px;background:#fbfbfb;border:1px solid #d0d0d0;border-bottom-color:#bcbcbc;border-radius:4px;"></div>
<div class="r" style="left:760px;top:1124px;width:1.6px;height:6px;background:#000"></div><div class="r" style="left:763px;top:1124px;width:1.8px;height:6px;background:#000"></div>
<div class="r" style="left:787px;top:1116px;width:36px;height:21px;background:#fbfbfb;border:1px solid #d0d0d0;border-bottom-color:#bcbcbc;border-radius:4px;"></div>
<svg style="position:absolute;left:797px;top:1119px" width="16" height="14"><path d="M1 5 H4 L8 2 V12 L4 10 H1 Z" fill="#000"/><path d="M9.5 5 L13 8.8 M13 5 L9.5 8.8" stroke="#000" stroke-width="1.2"/></svg>
<div class="t" style="left:830px;top:1120.84px;font-size:12px;letter-spacing:0px;color:#000;">Pixel / N:</div>
<div class="r" style="left:888px;top:1116px;width:36px;height:21px;background:#fbfbfb;border:1px solid #d0d0d0;border-bottom-color:#bcbcbc;border-radius:4px;"></div>

<div class="t" style="left:888px;top:1120.84px;width:36px;text-align:center;font-size:12px;">+</div>
<div class="t" style="left:931px;top:1120.84px;font-size:12px;letter-spacing:-0.3px;color:#000;">0.05</div>
<div class="r" style="left:959px;top:1116px;width:36px;height:21px;background:#fbfbfb;border:1px solid #d0d0d0;border-bottom-color:#bcbcbc;border-radius:4px;"></div>

<div class="t" style="left:959px;top:1120.84px;width:36px;text-align:center;font-size:12px;">-</div>
<div class="t" style="left:1002px;top:1120.84px;font-size:12px;letter-spacing:0px;color:#000;">Zeitlupe:</div>
<div class="r" style="left:1058px;top:1116px;width:36px;height:21px;background:#fbfbfb;border:1px solid #d0d0d0;border-bottom-color:#bcbcbc;border-radius:4px;"></div>

<div class="t" style="left:1058px;top:1120.84px;width:36px;text-align:center;font-size:12px;">+</div>
<div class="t" style="left:1101px;top:1120.84px;font-size:12px;letter-spacing:-0.3px;color:#000;">0.00%</div>
<div class="r" style="left:1139px;top:1116px;width:36px;height:21px;background:#fbfbfb;border:1px solid #d0d0d0;border-bottom-color:#bcbcbc;border-radius:4px;"></div>

<div class="t" style="left:1139px;top:1120.84px;width:36px;text-align:center;font-size:12px;">-</div>
</body></html>
